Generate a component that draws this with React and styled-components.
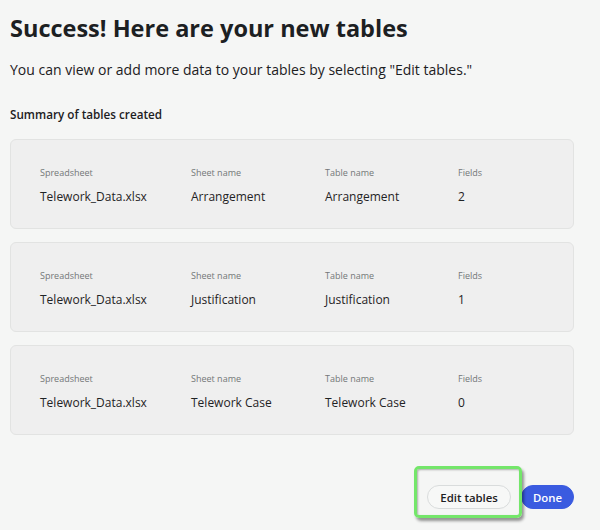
import styled, { createGlobalStyle } from 'styled-components';

const GlobalStyle = createGlobalStyle`
  html, body {
    margin: 0;
    padding: 0;
    background: #f5f6f5;
  }
  body {
    font-family: 'Open Sans', 'Noto Sans', sans-serif;
    color: #1c1f20;
  }
`;

const Page = styled.main`
  width: 600px;
  height: 530px;
  box-sizing: border-box;
  padding: 12px 26px 0 10px;
  display: flex;
  flex-direction: column;
`;

const Title = styled.h1`
  margin: 0;
  font-size: 23.5px;
  line-height: 32px;
  font-weight: 700;
  color: #1c2022;
`;

const Intro = styled.p`
  margin: 16px 0 0;
  font-size: 14px;
  line-height: 20px;
  color: #1c2022;
`;

const SummaryHeading = styled.h2`
  margin: 26px 0 0;
  font-size: 11.7px;
  line-height: 16px;
  font-weight: 600;
  color: #1c2022;
`;

const CardList = styled.div`
  margin-top: 17px;
  display: flex;
  flex-direction: column;
  gap: 13px;
`;

const Card = styled.section`
  height: 90px;
  box-sizing: border-box;
  background: #efefef;
  border: 1px solid #e2e3e2;
  border-radius: 6px;
  padding: 26px 0 0 29px;
  display: grid;
  grid-template-columns: 151px 134px 133px 1fr;
`;

const Cell = styled.div`
  display: flex;
  flex-direction: column;
  gap: 9px;
`;

const Label = styled.span`
  font-size: 9px;
  line-height: 14px;
  color: #737778;
`;

const Value = styled.span`
  font-size: 12px;
  line-height: 16px;
  color: #1f2325;
`;

const Actions = styled.div`
  margin-top: auto;
  margin-bottom: 21px;
  display: flex;
  justify-content: flex-end;
  align-items: center;
  gap: 10px;
`;

const Highlight = styled.span`
  position: relative;
  display: inline-flex;

  &::after {
    content: '';
    position: absolute;
    top: -19px;
    bottom: -9px;
    left: -13px;
    right: -11px;
    border: 3px solid #74e66a;
    border-radius: 5px;
    box-shadow: 2px 3px 3px rgba(0, 0, 0, 0.4),
      inset 1px 1px 2px rgba(0, 0, 0, 0.3);
    pointer-events: none;
  }
`;

const Button = styled.button`
  font-family: inherit;
  font-size: 11.4px;
  font-weight: 600;
  height: 24px;
  padding: 0 ${(p) => (p.$primary ? '11px' : '12px')};
  border-radius: 12px;
  cursor: pointer;
  border: 1px solid ${(p) => (p.$primary ? '#3a5be0' : '#d9dcdc')};
  background: ${(p) => (p.$primary ? '#3a5be0' : '#f7f8f7')};
  color: ${(p) => (p.$primary ? '#ffffff' : '#1c2022')};
`;

const tables = [
  { id: 1, spreadsheet: 'Telework_Data.xlsx', sheet: 'Arrangement', table: 'Arrangement', fields: 2 },
  { id: 2, spreadsheet: 'Telework_Data.xlsx', sheet: 'Justification', table: 'Justification', fields: 1 },
  { id: 3, spreadsheet: 'Telework_Data.xlsx', sheet: 'Telework Case', table: 'Telework Case', fields: 0 },
];

function TableCard({ spreadsheet, sheet, table, fields }) {
  return (
    <Card>
      <Cell>
        <Label>Spreadsheet</Label>
        <Value>{spreadsheet}</Value>
      </Cell>
      <Cell>
        <Label>Sheet name</Label>
        <Value>{sheet}</Value>
      </Cell>
      <Cell>
        <Label>Table name</Label>
        <Value>{table}</Value>
      </Cell>
      <Cell>
        <Label>Fields</Label>
        <Value>{fields}</Value>
      </Cell>
    </Card>
  );
}

export default function App() {
  return (
    <>
      <GlobalStyle />
      <Page>
        <Title>Success! Here are your new tables</Title>
        <Intro>You can view or add more data to your tables by selecting "Edit tables."</Intro>
        <SummaryHeading>Summary of tables created</SummaryHeading>
        <CardList>
          {tables.map(({ id, ...rest }) => (
            <TableCard key={id} {...rest} />
          ))}
        </CardList>
        <Actions>
          <Highlight>
            <Button>Edit tables</Button>
          </Highlight>
          <Button $primary>Done</Button>
        </Actions>
      </Page>
    </>
  );
}
